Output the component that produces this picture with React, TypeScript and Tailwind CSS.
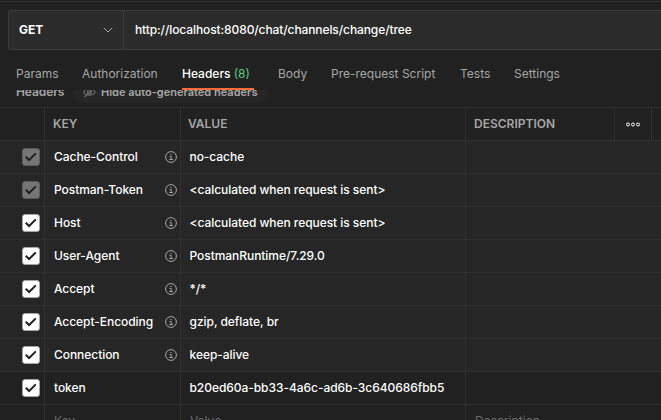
import React from "react";

type Row = { name: string; value: string; auto?: boolean; locked?: boolean };

const rows: Row[] = [
  { name: "Cache-Control", value: "no-cache", auto: true, locked: true },
  { name: "Postman-Token", value: "<calculated when request is sent>", auto: true, locked: true },
  { name: "Host", value: "<calculated when request is sent>", auto: true },
  { name: "User-Agent", value: "PostmanRuntime/7.29.0", auto: true },
  { name: "Accept", value: "*/*", auto: true },
  { name: "Accept-Encoding", value: "gzip, deflate, br", auto: true },
  { name: "Connection", value: "keep-alive", auto: true },
  { name: "token", value: "b20ed60a-bb33-4a6c-ad6b-3c640686fbb5" },
];

function CheckBox({ locked }: { locked?: boolean }) {
  return (
    <span
      className={`flex size-[18px] items-center justify-center rounded-[3px] border ${
        locked ? "border-[#5a5a5a] bg-[#757575]" : "border-[#a6a6a6] bg-white"
      }`}
    >
      <svg width="16" height="16" viewBox="0 0 16 16" fill="none" className="shrink-0">
        <path d="M2.7 7.8 L6.1 11 L12.8 4.4" stroke="#212121" strokeWidth="2" />
      </svg>
    </span>
  );
}

function InfoIcon() {
  return (
    <svg width="12" height="12" viewBox="0 0 12 12" fill="none" stroke="#a6a6a6">
      <circle cx="6" cy="6" r="5.4" />
      <path d="M4.6 5.4 H6.2 V8.5 M4.3 8.5 H7.9" />
      <path d="M5.4 3.5 H6.6" />
    </svg>
  );
}

function EyeOffIcon() {
  return (
    <svg width="13" height="12" viewBox="0 0 13 12" fill="none" stroke="#6b6b6b" strokeWidth="1.1">
      <path d="M0.8 6 C3 1.8 10 1.8 12.2 6 C10 10.2 3 10.2 0.8 6 Z" />
      <circle cx="6.5" cy="6" r="2" />
      <path d="M1.5 11 L11.5 1" strokeWidth="1.4" />
    </svg>
  );
}

const tabs = ["Params", "Authorization", "Headers", "Body", "Pre-request Script", "Tests", "Settings"];

const tabWidths = [
  "w-[66px]",
  "w-[100px]",
  "w-[96px]",
  "w-[53px]",
  "w-[129px]",
  "w-[54px]",
  "w-[60px]",
];

export default function App() {
  return (
    <div className="flex h-[420px] w-[661px] flex-col overflow-hidden bg-[#212121] pt-px font-['Inter',sans-serif] text-[12px] leading-4 text-white">
      <div className="h-px shrink-0 bg-[#303030]" />
      <div className="mt-2 ml-2 flex h-10 shrink-0 rounded-l-[3px] border-y border-l border-[#3c3c3c] bg-[#2b2b2b]">
        <div className="flex w-[115px] items-center justify-between border-r border-[#3c3c3c] pr-[10px] pl-[10px] font-bold">
          <span>GET</span>
          <svg width="10" height="6" viewBox="0 0 10 6" fill="none" stroke="#a6a6a6">
            <path d="M0.8 0.8 L5 5 L9.2 0.8" />
          </svg>
        </div>
        <div className="flex items-center pb-px pl-[11px] font-medium tracking-[-0.1px]">
          http://localhost:8080/chat/channels/change/tree
        </div>
      </div>

      <div className="flex h-10 shrink-0 pt-4 pl-4 text-[#a6a6a6]">
        {tabs.map((tab, i) => (
          <div key={tab} className={`shrink-0 whitespace-nowrap ${tabWidths[i]}`}>
            {tab === "Headers" ? (
              <div className="flex h-6 w-[72px] items-start border-b-2 border-[#ff6c37] font-medium text-white">
                Headers&nbsp;<span className="font-normal text-[#5fcf80]">(8)</span>
              </div>
            ) : (
              tab
            )}
          </div>
        ))}
      </div>

      <div className="flex h-[17px] shrink-0 items-end overflow-hidden pb-[6px] pl-4 font-semibold text-[#a6a6a6]">
        <span className="-mb-px w-[57px] leading-5 tracking-[-0.1px]">Headers</span>
        <div className="-mb-0.5 flex h-[22px] w-[195px] items-center rounded-full bg-[#262626] pl-[10px] text-[11px]">
          <EyeOffIcon />
          <span className="ml-[5px] whitespace-nowrap">Hide auto-generated headers</span>
        </div>
      </div>

      <div className="grid h-[34px] shrink-0 grid-cols-[44px_136px_285px_149px_37px_10px] border-y border-[#303030] font-semibold text-[#a6a6a6] *:flex *:items-center *:border-[#303030]">
        <div />
        <div className="border-l pl-2">KEY</div>
        <div className="border-l pl-[7px]">VALUE</div>
        <div className="border-l pl-2">DESCRIPTION</div>
        <div className="justify-center border-l">
          <svg width="14" height="5" viewBox="0 0 14 5" fill="none" stroke="#ffffff">
            <circle cx="2" cy="2.5" r="1.5" />
            <circle cx="7" cy="2.5" r="1.5" />
            <circle cx="12" cy="2.5" r="1.5" />
          </svg>
        </div>
        <div className="border-l" />
      </div>

      {rows.map((row) => (
        <div
          key={row.name}
          className={`grid h-[33px] shrink-0 grid-cols-[44px_136px_285px_196px] border-b border-[#303030] font-medium tracking-[-0.05px] *:flex *:items-center *:border-[#303030] ${
            row.auto ? "bg-[#262626]" : ""
          }`}
        >
          <div className="pl-[22px]">
            <CheckBox locked={row.locked} />
          </div>
          <div className="justify-between border-l pr-[3px] pl-[9px]">
            <span>{row.name}</span>
            {row.auto && <InfoIcon />}
          </div>
          <div className="border-l pl-[8.5px]">{row.value}</div>
          <div className="border-l" />
        </div>
      ))}

      <div className="grid h-[33px] shrink-0 grid-cols-[44px_136px_285px_196px] text-[#6b6b6b] *:flex *:items-center *:border-[#303030]">
        <div />
        <div className="border-l pb-px pl-[9px]">Key</div>
        <div className="border-l pb-px pl-[9px]">Value</div>
        <div className="border-l pb-px pl-[9px]">Description</div>
      </div>
    </div>
  );
}
